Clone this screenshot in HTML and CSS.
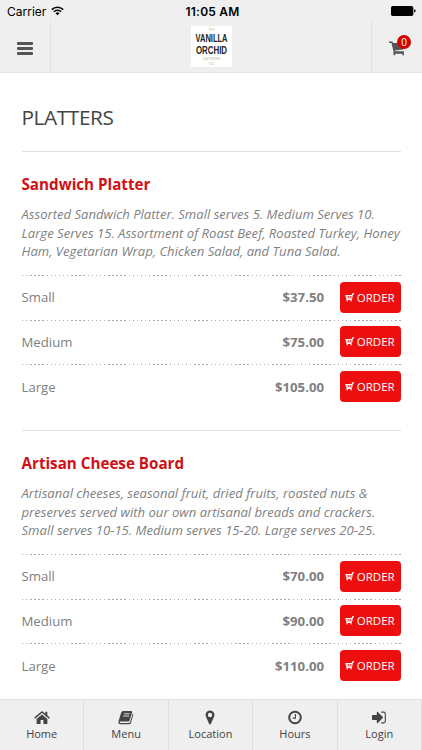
FILE: index.html
```
<!DOCTYPE html>
<html lang="en">
<head>
    <meta charset="UTF-8">
    <meta name="viewport" content="width=device-width, initial-scale=1.0">
    <title>Vanilla Orchid - Platters</title>
    <link rel="stylesheet" href="styles.css">
</head>
<body>

    <!-- Shared icons -->
    <svg class="hidden">
        <symbol id="cart" viewBox="0 0 17 15">
            <path d="M0 .6h3.4l.7 1.5h12.4l-2.3 6.4-8.4 1 .3.8h8.8v3.9h-1.6v-1.4H6.2v1.4H4.5v-3.6L2.5 2H0z"/>
        </symbol>
        <symbol id="cartSmall" viewBox="0 0 9 9">
            <path d="M9 .9H7.5L6.7 5.2H1.6L1 2.6h6M1.4 6.5h5.2" fill="none" stroke="#fff" stroke-width="1.1"/>
            <path d="M2.6 2.6v2.6M4.6 2.6v2.6" stroke="#fff" stroke-width=".7"/>
            <circle cx="2.2" cy="7.8" r=".8"/>
            <circle cx="6.2" cy="7.8" r=".8"/>
        </symbol>
    </svg>

    <!-- Status bar -->
    <div class="status-bar">
        <div class="carrier">
            <span>Carrier</span>
            <svg width="13" height="10" viewBox="0 0 13 10">
                <path d="M.8 3.6a8.1 8.1 0 0 1 11.4 0M2.9 5.8a5.1 5.1 0 0 1 7.2 0" fill="none" stroke="#000" stroke-width="1.6"/>
                <path d="M4.5 7.3a2.9 2.9 0 0 1 4 0l-2 2z"/>
            </svg>
        </div>
        <div class="time">11:05 AM</div>
        <div class="battery">
            <svg width="25" height="10" viewBox="0 0 25 10">
                <rect width="22.3" height="10" rx="1.8"/>
                <path d="M23.2 3.3q1.5.3 1.5 1.7t-1.5 1.7z"/>
            </svg>
        </div>
    </div>

    <!-- Header -->
    <div class="header">
        <div class="menu-button">
            <span></span>
            <span></span>
            <span></span>
        </div>
        <svg class="logo" width="41" height="41" viewBox="0 0 41 41">
            <rect width="41" height="41" fill="#fff"/>
            <text class="logo-small" x="17.5" y="5" textLength="6" lengthAdjust="spacingAndGlyphs">THE</text>
            <text class="logo-name" x="4.5" y="16" textLength="32" lengthAdjust="spacingAndGlyphs">VANILLA</text>
            <text class="logo-name" x="5" y="28" textLength="31" lengthAdjust="spacingAndGlyphs">ORCHID</text>
            <text class="logo-small" x="11.5" y="34" textLength="18" lengthAdjust="spacingAndGlyphs">CATERING</text>
            <text class="logo-small" x="18" y="38.5" textLength="5" lengthAdjust="spacingAndGlyphs">CO</text>
        </svg>
        <div class="cart-button">
            <svg width="17" height="15"><use href="#cart"/></svg>
            <span class="badge">0</span>
        </div>
    </div>

    <!-- Menu items -->
    <div class="content">
        <h2>PLATTERS</h2>

        <div class="item">
            <h3>Sandwich Platter</h3>
            <p>Assorted Sandwich Platter. Small serves 5. Medium Serves 10.<br>Large Serves 15. Assortment of Roast Beef, Roasted Turkey, Honey<br>Ham, Vegetarian Wrap, Chicken Salad, and Tuna Salad.</p>
            <div class="row">
                <span>Small</span>
                <strong>$37.50</strong>
                <button><svg width="9" height="9"><use href="#cartSmall"/></svg>ORDER</button>
            </div>
            <div class="row">
                <span>Medium</span>
                <strong>$75.00</strong>
                <button><svg width="9" height="9"><use href="#cartSmall"/></svg>ORDER</button>
            </div>
            <div class="row">
                <span>Large</span>
                <strong>$105.00</strong>
                <button><svg width="9" height="9"><use href="#cartSmall"/></svg>ORDER</button>
            </div>
        </div>

        <div class="item">
            <h3>Artisan Cheese Board</h3>
            <p>Artisanal cheeses, seasonal fruit, dried fruits, roasted nuts &amp;<br>preserves served with our own artisanal breads and crackers.<br>Small serves 10-15. Medium serves 15-20. Large serves 20-25.</p>
            <div class="row">
                <span>Small</span>
                <strong>$70.00</strong>
                <button><svg width="9" height="9"><use href="#cartSmall"/></svg>ORDER</button>
            </div>
            <div class="row">
                <span>Medium</span>
                <strong>$90.00</strong>
                <button><svg width="9" height="9"><use href="#cartSmall"/></svg>ORDER</button>
            </div>
            <div class="row">
                <span>Large</span>
                <strong>$110.00</strong>
                <button><svg width="9" height="9"><use href="#cartSmall"/></svg>ORDER</button>
            </div>
        </div>
    </div>

    <!-- Bottom navigation -->
    <div class="tabs">
        <div class="tab">
            <svg width="16" height="14" viewBox="0 0 16 14">
                <path d="M8 3.9l5.4 4.5v4.4q0 .6-.6.6H9.4V9.6H6.6v3.8H3.2q-.6 0-.6-.6V8.4z"/>
                <path d="M.6 7.6L8 1.4l7.4 6.2" fill="none" stroke="#444" stroke-width="1.4"/>
                <path d="M11.3 1.2h2v4.4l-2-1.6z"/>
            </svg>
            <span>Home</span>
        </div>
        <div class="tab">
            <svg width="16" height="14" viewBox="0 0 16 14">
                <path d="M5.2.5h8q1.2.2.9 1.4l-2.5 8.2q-.3.9-1.2.9H2.3q-.8 0-.7.7t1 .7h8.5q.8 0 1.1-.8l2.6-8.6q.8.5.5 1.5l-2.4 8q-.4 1.2-1.6 1.2H2.4Q.2 13.6.3 11.4l2.8-9.1Q3.6.5 5.2.5z"/>
                <path d="M6 3.3h5.7M5.3 5.5H11" stroke="#efefef" stroke-width=".9"/>
            </svg>
            <span>Menu</span>
        </div>
        <div class="tab">
            <svg width="10" height="15" viewBox="0 0 10 15">
                <path fill-rule="evenodd" d="M5 .5a4.4 4.4 0 0 1 4 6.3L5.8 13.9q-.8 1-1.6 0L1 6.8A4.4 4.4 0 0 1 5 .5zm0 2.3a2.2 2.2 0 1 0 0 4.4 2.2 2.2 0 0 0 0-4.4z"/>
            </svg>
            <span>Location</span>
        </div>
        <div class="tab">
            <svg width="14" height="14" viewBox="0 0 14 14">
                <circle cx="7" cy="7" r="5.8" fill="none" stroke="#444" stroke-width="2"/>
                <path d="M7.4 3.6v4H4.8" fill="none" stroke="#444" stroke-width="1.1"/>
            </svg>
            <span>Hours</span>
        </div>
        <div class="tab">
            <svg width="14" height="14" viewBox="0 0 14 14">
                <path d="M0 5.2q0-.6.6-.6h4.2V1.8q.3-.8 1-.2l5 5q.4.4 0 .8l-5 5q-.7.6-1-.2V9.4H.6q-.6 0-.6-.6z"/>
                <path d="M9.2 1.6h2.3q1.8 0 1.8 1.8v7.2q0 1.8-1.8 1.8H9.2" fill="none" stroke="#444" stroke-width="1.1"/>
            </svg>
            <span>Login</span>
        </div>
    </div>

</body>
</html>
```
FILE: styles.css
```
* {
    box-sizing: border-box;
}
body {
    margin: 0;
    height: 750px;
    display: flex;
    flex-direction: column;
    overflow: hidden;
    background-color: #fff;
    color: #444;
    font-family: "Open Sans", sans-serif;
}
.hidden {
    display: none;
}
.status-bar {
    display: grid;
    grid-template-columns: 1fr auto 1fr;
    align-items: center;
    height: 20px;
    padding: 2px 6px 0 7px;
    background-color: #efefef;
    color: #000;
    font-family: Inter, sans-serif;
    font-size: 12px;
}
.carrier {
    display: flex;
    align-items: center;
    gap: 5px;
}
.time {
    margin-left: 2px;
    font-weight: 600;
    letter-spacing: 0.2px;
}
.battery {
    display: flex;
    justify-content: flex-end;
}
.header {
    display: flex;
    justify-content: space-between;
    height: 53px;
    flex-shrink: 0;
    background-color: #efefef;
    border-bottom: 1px solid #e4e4e4;
}
.menu-button {
    width: 51px;
    padding: 22px 17px 0 17px;
    border-right: 1px solid #e2e2e2;
}
.menu-button span {
    display: block;
    height: 3px;
    margin-bottom: 2px;
    border-radius: 1px;
    background-color: #555;
}
.logo {
    margin-top: 6px;
}
.logo-small {
    fill: #c9b583;
    font-size: 3.5px;
}
.logo-name {
    fill: #222;
    font-family: "Liberation Sans", sans-serif;
    font-size: 11.5px;
    font-weight: 700;
}
.cart-button {
    position: relative;
    width: 51px;
    padding: 21px 0 0 17px;
    border-left: 1px solid #e2e2e2;
}
.cart-button svg {
    display: block;
    fill: #555;
}
.badge {
    position: absolute;
    top: 15px;
    left: 25px;
    width: 14px;
    height: 14px;
    border-radius: 50%;
    background-color: #d40000;
    color: #fff;
    font-size: 10px;
    line-height: 14px;
    text-align: center;
}
.content {
    flex: 1;
    min-height: 0;
    overflow: hidden;
    padding: 0 21px 0 21.5px;
}
h2 {
    height: 78px;
    margin: 0;
    padding-top: 28px;
    font-size: 20.8px;
    font-weight: 400;
    line-height: 32px;
    letter-spacing: -0.4px;
}
.item {
    height: 279px;
    padding-top: 21px;
    border-top: 1px solid #e0e0e0;
}
.item h3 {
    margin: 0;
    color: #d01015;
    font-size: 15.2px;
    line-height: 23px;
}
.item p {
    margin: 9.4px 0 14.6px;
    color: #7f7f7f;
    font-size: 13.1px;
    font-style: italic;
    line-height: 18.3px;
    white-space: nowrap;
}
.row {
    display: flex;
    align-items: center;
    height: 44.7px;
    background: repeating-linear-gradient(to right, #aaa 0 1.4px, transparent 1.4px 4.1px) top / 100% 1px no-repeat;
    color: #808080;
    font-size: 13.2px;
}
.row strong {
    margin-left: auto;
    margin-right: 16px;
}
.row button {
    display: flex;
    align-items: center;
    justify-content: center;
    gap: 2.5px;
    width: 61px;
    height: 31px;
    padding: 0 1px 0 0;
    border: none;
    border-radius: 4px;
    background-color: #ed0f0f;
    color: #fff;
    font-family: inherit;
    font-size: 11.5px;
}
.row button svg {
    fill: #fff;
}
.tabs {
    display: grid;
    grid-template-columns: repeat(5, 1fr);
    height: 51px;
    flex-shrink: 0;
    background-color: #efefef;
    border-top: 1px solid #dedede;
}
.tab {
    display: flex;
    flex-direction: column;
    align-items: center;
    padding-top: 10px;
    border-right: 1px solid #dedede;
    font-size: 11px;
}
.tab svg {
    height: 15px;
    fill: #444;
}
.tab span {
    line-height: 17px;
}
```
